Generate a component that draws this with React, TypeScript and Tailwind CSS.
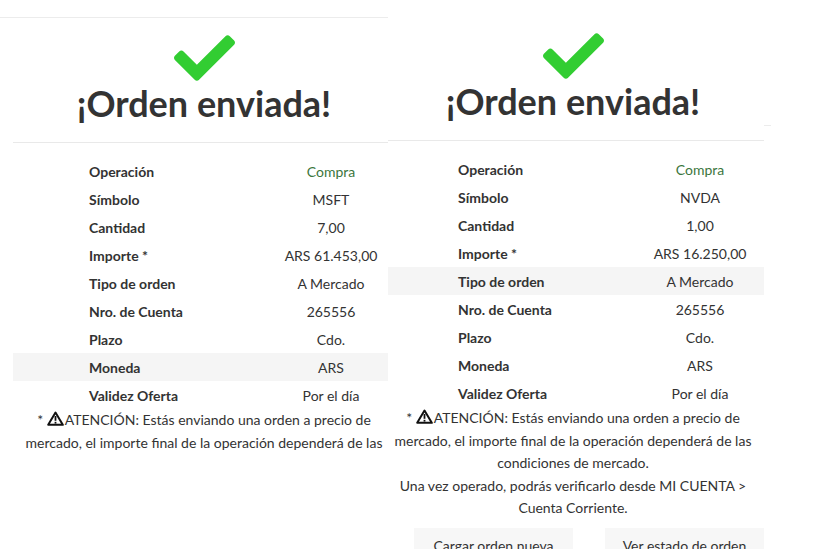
import React from "react";

const rows: [string, string][] = [
  ["Operación", "Compra"],
  ["Símbolo", ""],
  ["Cantidad", ""],
  ["Importe *", ""],
  ["Tipo de orden", "A Mercado"],
  ["Nro. de Cuenta", "265556"],
  ["Plazo", "Cdo."],
  ["Moneda", "ARS"],
  ["Validez Oferta", "Por el día"],
];

function Check() {
  return (
    <svg width="61" height="46" viewBox="0 64 512 384" className="block">
      <path
        fill="#32cd32"
        d="M173.898 439.404l-166.4-166.4c-9.997-9.997-9.997-26.206 0-36.204l36.203-36.204c9.997-9.998 26.207-9.998 36.204 0L192 312.69 432.095 72.596c9.997-9.997 26.207-9.997 36.204 0l36.203 36.204c9.997 9.997 9.997 26.206 0 36.204l-294.4 294.401c-9.998 9.997-26.207 9.997-36.204-.001z"
      />
    </svg>
  );
}

function Warn() {
  return (
    <svg width="17" height="15" viewBox="0 0 17 15" className="inline-block align-[-1px] mr-[1px]">
      <path d="M8.5 1.5 L15.8 13.8 H1.2 Z" fill="none" stroke="#111" strokeWidth="2" strokeLinejoin="round" />
      <rect x="7.6" y="5" width="1.8" height="4.8" fill="#111" />
      <rect x="7.6" y="10.8" width="1.8" height="1.8" fill="#111" />
    </svg>
  );
}

function Panel({
  symbol,
  qty,
  amount,
  hl,
  labelPad,
  valuePad,
  centerPad,
  full,
}: {
  symbol: string;
  qty: string;
  amount: string;
  hl: number;
  labelPad: string;
  valuePad: string;
  centerPad: string;
  full: boolean;
}) {
  const data = rows.map(([k, v], i) => {
    if (i === 1) return [k, symbol];
    if (i === 2) return [k, qty];
    if (i === 3) return [k, amount];
    return [k, v];
  });
  return (
    <div className="flex flex-col">
      <div className={`flex flex-col items-center ${centerPad}`}>
        <div className="mt-[17px]">
          <Check />
        </div>
        <div className="text-[36px] leading-[43px] font-bold text-[#333] mt-[1px]">¡Orden enviada!</div>
      </div>
      <div className="h-px bg-[#e9e9e9] mt-[17px]" />
      <div className="mt-[14px] flex flex-col text-[14px] text-[#333]">
        {data.map(([k, v], i) => (
          <div key={k} className={`flex h-[28px] items-center ${i === hl ? "bg-[#f5f5f5]" : ""} ${valuePad}`}>
            <div className={`flex-1 font-bold ${labelPad}`}>{k}</div>
            <div className={`w-[114px] text-center ${i === 0 ? "text-[#3c763d]" : ""}`}>{v}</div>
          </div>
        ))}
      </div>
      <div className={`text-[14px] leading-[22.5px] text-[#333] text-center whitespace-nowrap ${centerPad}`}>
        *&nbsp;<Warn />ATENCIÓN: Estás enviando una orden a precio de
        <br />
        mercado, el importe final de la operación dependerá de las
        {full && (
          <>
            <br />
            condiciones de mercado.
            <br />
            Una vez operado, podrás verificarlo desde MI CUENTA &gt;
            <br />
            Cuenta Corriente.
          </>
        )}
      </div>
      {full && (
        <div className="flex gap-[32px] pl-[26px] mt-[8px]">
          <div className="w-[159px] h-[44px] bg-[#f7f7f7] text-center text-[14px] leading-[20px] pt-[8px] text-[#333]">
            Cargar orden nueva
          </div>
          <div className="w-[159px] h-[44px] bg-[#f7f7f7] text-center text-[14px] leading-[20px] pt-[8px] text-[#333]">
            Ver estado de orden
          </div>
        </div>
      )}
    </div>
  );
}

export default function App() {
  return (
    <div
      className="relative w-[828px] h-[558px] bg-white overflow-hidden flex items-start"
      style={{ fontFamily: "Lato, 'Open Sans', sans-serif" }}
    >
      <div className="w-[388px] flex flex-col shrink-0">
        <div className="h-[17px]" />
        <div className="h-px bg-[#ececec]" />
        <div className="ml-[13px] h-[434px] overflow-hidden">
          <Panel
            symbol="MSFT"
            qty="7,00"
            amount="ARS 61.453,00"
            hl={7}
            labelPad="pl-[76px]"
            valuePad=""
            centerPad="pl-[7px]"
            full={false}
          />
        </div>
      </div>
      <div className="w-[376px] h-[549px] overflow-hidden shrink-0">
        <div className="mt-[16px]">
          <Panel
            symbol="NVDA"
            qty="1,00"
            amount="ARS 16.250,00"
            hl={4}
            labelPad="pl-[70px]"
            valuePad="pr-[7px]"
            centerPad="pr-[6px]"
            full={true}
          />
        </div>
      </div>
      <div className="absolute left-[764px] top-[125px] w-[7px] h-px bg-[#ececec]" />
    </div>
  );
}
